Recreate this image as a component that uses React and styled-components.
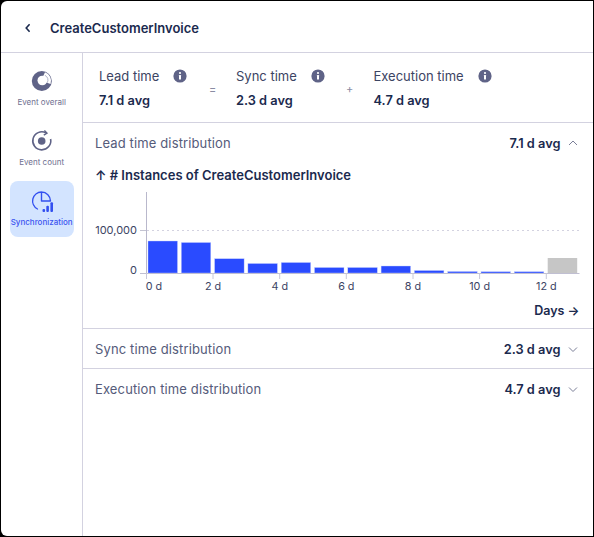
import React from "react";
import styled, { createGlobalStyle } from "styled-components";

const Global = createGlobalStyle`
  html, body { margin: 0; padding: 0; background: #000; }
  body { font-family: Inter, "Noto Sans", sans-serif; color: #1b2a4e; }
  * { box-sizing: border-box; }
`;

const Frame = styled.div`
  width: 594px; height: 537px; background: #000; padding: 1px 1.5px 1.3px 1.3px;
`;
const Panel = styled.div`
  width: 100%; height: 100%; background: #fff; border-radius: 6px 0 0 6px;
  display: flex; flex-direction: column; overflow: hidden;
`;
const Header = styled.header`
  height: 52px; flex: none; display: flex; align-items: center; gap: 18px;
  padding: 2px 0 0 22.7px; border-bottom: 1px solid #d3d2e0;
`;
const Back = styled.svg`width: 8px; height: 12px;`;
const Title = styled.h1`
  margin: 0; font-size: 13px; font-weight: 600; color: #1b2a4e; line-height: 16px;
`;
const Body = styled.div`flex: 1; display: flex; min-height: 0;`;
const Sidebar = styled.nav`
  width: 81.7px; flex: none; border-right: 1px solid #d3d2e0;
  display: flex; flex-direction: column; align-items: center; padding: 8px 0 0 0;
`;
const NavItem = styled.div`
  width: 64px; height: 56px; border-radius: 8px; flex: none;
  display: flex; flex-direction: column; align-items: center; justify-content: flex-start;
  padding-top: 9px; margin-bottom: ${p => p.$gap}px;
  background: ${p => (p.$active ? "#d3e4ff" : "transparent")};
`;
const NavIcon = styled.svg`width: 22px; height: 22px; flex: none; overflow: visible;`;
const NavLabel = styled.span`
  font-size: 8px; line-height: 10px; margin-top: 5px; white-space: nowrap;
  font-weight: ${p => (p.$active ? 500 : 400)};
  color: ${p => (p.$active ? "#3c55f0" : "#6f7090")};
`;
const Main = styled.main`flex: 1; min-width: 0; display: flex; flex-direction: column;`;
const Metrics = styled.section`
  height: 70px; flex: none; display: flex; align-items: center;
  padding: 2px 0 0 16px; border-bottom: 1px solid #d3d2e0;
`;
const Metric = styled.div`width: ${p => p.$w}px; flex: none;`;
const MetricTop = styled.div`display: flex; align-items: center; gap: 14px; height: 16px;`;
const MetricName = styled.span`font-size: 13px; line-height: 16px; color: #3c4463; white-space: nowrap;`;
const MetricValue = styled.div`
  font-size: 12.8px; font-weight: 600; line-height: 16px; margin-top: 9px; color: #1b2a4e;
`;
const Op = styled.span`
  width: ${p => p.$w}px; flex: none; font-size: 11px; color: #8a8ca3; padding-left: 1px;
`;
const Info = styled.svg`width: 14px; height: 14px; flex: none;`;
const Row = styled.div`
  height: 40px; flex: none; display: flex; align-items: center; justify-content: space-between;
  padding: ${p => (p.$last ? 0 : 1)}px 14px 0 12px;
  border-bottom: ${p => (p.$last ? "none" : "1px solid #d3d2e0")};
`;
const RowLabel = styled.span`font-size: 13px; color: #555b7a; letter-spacing: 0.13px;`;
const RowRight = styled.span`display: flex; align-items: center; gap: 6px;`;
const RowValue = styled.span`font-size: 12.8px; font-weight: 600; color: #1b2a4e;`;
const Chev = styled.svg`width: 12px; height: 12px; flex: none;`;
const Chart = styled.section`
  height: 166px; flex: none; display: flex; flex-direction: column;
  border-bottom: 1px solid #d3d2e0;
`;
const ChartTitle = styled.h2`
  margin: 4px 0 0 12px; font-size: 13px; line-height: 16px; font-weight: 600; color: #1b2a4e;
`;
const Plot = styled.svg`width: 508px; height: 110px; flex: none; margin-top: 9px; display: block;`;
const AxisName = styled.div`
  text-align: right; padding-right: 13px; margin-top: 1px;
  font-size: 12.5px; line-height: 16px; font-weight: 600; color: #1b2a4e;
`;

const bars = [241, 242.5, 258.7, 263.5, 262.5, 267.5, 267.5, 266, 270.5, 271.5, 271.7, 271.7];
const ticks = [[146.5, "0 d", 154], [213, "2 d", 213], [279.7, "4 d", 279.7], [346.3, "6 d", 346.3], [413, "8 d", 413], [479.6, "10 d", 479.6], [546.3, "12 d", 546.3]];
// Plot's origin sits at page (83, 192)
const ox = 83, oy = 192;

const InfoIcon = () => (
  <Info viewBox="0 0 14 14">
    <circle cx="7" cy="7" r="6.6" fill="#5f6387" />
    <circle cx="7" cy="4" r="1.1" fill="#fff" />
    <rect x="6" y="6" width="2" height="4.6" rx=".4" fill="#fff" />
  </Info>
);
const Chevron = ({ up }) => (
  <Chev viewBox="0 0 12 12">
    <path d={up ? "M2 8l4-4 4 4" : "M2 4.5l4 4 4-4"} fill="none" stroke="#7b7f98" strokeWidth="1" />
  </Chev>
);

const Rows = ({ label, value, up, last }) => (
  <Row $last={last}>
    <RowLabel>{label}</RowLabel>
    <RowRight><RowValue>{value}</RowValue><Chevron up={up} /></RowRight>
  </Row>
);

export default function App() {
  return (
    <Frame>
      <Global />
      <Panel>
        <Header>
          <Back viewBox="0 0 8 12">
            <path d="M5.6 2.2L2.2 6l3.4 3.8" fill="none" stroke="#1b2a4e" strokeWidth="1.6" />
          </Back>
          <Title>CreateCustomerInvoice</Title>
        </Header>
        <Body>
          <Sidebar>
            <NavItem $gap={4}>
              <NavIcon viewBox="0 0 22 22">
                <circle cx="10.8" cy="11" r="10" fill="#5f6387" />
                <path d="M14 2.3A9.2 9.2 0 0 1 19.6 14L14 12A4 4 0 0 0 12 6.5Z" fill="#fff" />
                <circle cx="11.3" cy="10.5" r="4.8" fill="#fff" />
                <path d="M13.8 5.2A6 6 0 0 1 16.4 12.6" fill="none" stroke="#a9abc0" strokeWidth=".9" />
              </NavIcon>
              <NavLabel>Event overall</NavLabel>
            </NavItem>
            <NavItem $gap={4}>
              <NavIcon viewBox="0 0 22 22">
                <path d="M15 2.9A9 9 0 1 0 19.6 9" fill="none" stroke="#5f6387" strokeWidth="1.6" />
                <path d="M13.4 .4L16 3.1 12.8 5.2" fill="none" stroke="#5f6387" strokeWidth="1.4" />
                <circle cx="10.7" cy="11" r="3.8" fill="#5f6387" />
              </NavIcon>
              <NavLabel>Event count</NavLabel>
            </NavItem>
            <NavItem $active $gap={0}>
              <NavIcon viewBox="0 0 22 22">
                <path d="M6.5 19A9 9 0 0 1 10.5 2V11H19.5A9 9 0 0 0 10.5 2" fill="none" stroke="#3350f0" strokeWidth="1.4" strokeLinecap="round" strokeLinejoin="round" />
                <rect x="11.5" y="19" width="2.6" height="3" rx="1" fill="#3350f0" />
                <rect x="15.3" y="15.7" width="2.6" height="6.3" rx="1" fill="#3350f0" />
                <rect x="19.4" y="12.3" width="2.6" height="9.7" rx="1" fill="#3350f0" />
              </NavIcon>
              <NavLabel $active>Synchronization</NavLabel>
            </NavItem>
          </Sidebar>
          <Main>
            <Metrics>
              <Metric $w={109}>
                <MetricTop><MetricName>Lead time</MetricName><InfoIcon /></MetricTop>
                <MetricValue>7.1 d avg</MetricValue>
              </Metric>
              <Op $w={28}>=</Op>
              <Metric $w={109}>
                <MetricTop><MetricName>Sync time</MetricName><InfoIcon /></MetricTop>
                <MetricValue>2.3 d avg</MetricValue>
              </Metric>
              <Op $w={28.5}>+</Op>
              <Metric $w={125}>
                <MetricTop><MetricName>Execution time</MetricName><InfoIcon /></MetricTop>
                <MetricValue>4.7 d avg</MetricValue>
              </Metric>
            </Metrics>
            <Rows label="Lead time distribution" value="7.1 d avg" up last />
            <Chart>
              <ChartTitle>↑ # Instances of CreateCustomerInvoice</ChartTitle>
              <Plot viewBox="0 0 508 110">
                <line x1={146.5 - ox} x2={146.5 - ox} y1="0" y2={273 - oy} stroke="#b9b8cc" />
                <line x1={140 - ox} x2={146 - ox} y1={230.5 - oy} y2={230.5 - oy} stroke="#c4c4d2" />
                <line x1={147 - ox} x2={580 - ox} y1={230.5 - oy} y2={230.5 - oy} stroke="#d3d2e0" strokeDasharray="2 3" />
                {bars.map((top, i) => (
                  <rect key={i} x={148 + i * 33.3 - ox} y={top - oy} width="29.5" height={273 - top}
                    fill="#2a4bff" stroke="#c5d0ff" strokeWidth=".4" />
                ))}
                <rect x={547.7 - ox} y={258 - oy} width="29.5" height="15" fill="#c6c6c6" />
                <line x1={140 - ox} x2={579.5 - ox} y1={273.5 - oy} y2={273.5 - oy} stroke="#c0bfd2" />
                {ticks.map(([x, label, c]) => (
                  <g key={label}>
                    <line x1={x - ox} x2={x - ox} y1={273 - oy} y2={279 - oy} stroke="#c9c8d8" />
                    <text x={c - ox} y={290 - oy} textAnchor="middle" fontSize="10.8" fill="#3c4463" fontFamily="Inter">{label}</text>
                  </g>
                ))}
                <text x={137 - ox} y={234 - oy} textAnchor="end" fontSize="11" fill="#3c4463" fontFamily="Inter">100,000</text>
                <text x={137 - ox} y={274 - oy} textAnchor="end" fontSize="11" fill="#3c4463" fontFamily="Inter">0</text>
              </Plot>
              <AxisName>Days →</AxisName>
            </Chart>
            <Rows label="Sync time distribution" value="2.3 d avg" />
            <Rows label="Execution time distribution" value="4.7 d avg" last />
          </Main>
        </Body>
      </Panel>
    </Frame>
  );
}
